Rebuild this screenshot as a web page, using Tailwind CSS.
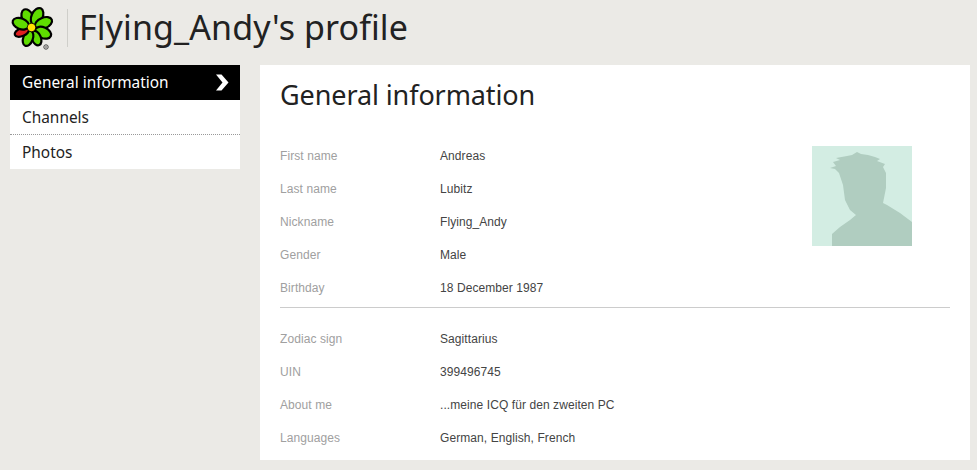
<!DOCTYPE html>
<html lang="en">
<head>
  <meta charset="UTF-8">
  <meta name="viewport" content="width=device-width, initial-scale=1.0">
  <title>Flying_Andy's profile</title>
  <script src="https://cdn.jsdelivr.net/npm/@tailwindcss/browser@4"></script>
</head>
<body class="bg-[#ebeae6] h-[470px] overflow-hidden font-['Noto_Sans',sans-serif] text-[#222]">
  <header class="flex items-center h-[65px] pl-[10px] pb-[10px]">
    <svg class="w-[44px] h-[46px]" viewBox="0 0 44 46">
      <g stroke="#000" stroke-width="2.2">
        <ellipse cx="22" cy="11.5" rx="5.6" ry="8.5" fill="#5fdc00" transform="rotate(-23 22 23)"/>
        <ellipse cx="22" cy="10.5" rx="5.6" ry="9" fill="#5fdc00" transform="rotate(24 22 23)"/>
        <ellipse cx="22" cy="10.5" rx="5.4" ry="9" fill="#5fdc00" transform="rotate(67 22 23)"/>
        <ellipse cx="22" cy="11" rx="5.4" ry="8.5" fill="#5fdc00" transform="rotate(113 22 23)"/>
        <ellipse cx="22" cy="12" rx="4.6" ry="7.5" fill="#5fdc00" transform="rotate(157 22 23)"/>
        <ellipse cx="22" cy="12" rx="4.8" ry="8" fill="#5fdc00" transform="rotate(201 22 23)"/>
        <ellipse cx="22" cy="12" rx="4" ry="7.5" fill="#e02020" transform="rotate(248 22 23)"/>
        <ellipse cx="22" cy="11" rx="5.4" ry="8.5" fill="#5fdc00" transform="rotate(291 22 23)"/>
        <circle cx="21.5" cy="22.5" r="4.2" fill="#ffe100" stroke-width="0.8"/>
      </g>
      <circle cx="36" cy="42" r="2.2" fill="none" stroke="#444" stroke-width="1"/>
      <circle cx="36" cy="42" r="0.8" fill="#444"/>
    </svg>
    <div class="w-px h-[38px] bg-[#cfcfca] ml-[13px] mr-[11px]"></div>
    <h1 class="text-[34px] leading-none tracking-[0.1px] -mt-[1px]">Flying_Andy's profile</h1>
  </header>

  <div class="flex items-start pl-[10px] gap-[20px]">
    <nav class="w-[230px] bg-white text-[15.4px]">
      <a class="flex items-center justify-between h-[35px] pl-[12px] pr-[11px] bg-black text-white">
        General information
        <svg class="w-[14px] h-[17px]" viewBox="0 0 14 17"><path d="M1 0.5h5.5l7 8-7 8H1l6.5-8z" fill="#fff"/></svg>
      </a>
      <a class="flex items-center h-[35px] pl-[12px] pt-[1px] border-b border-dotted border-[#999]">Channels</a>
      <a class="flex items-center h-[34px] pl-[12px] pt-[1px]">Photos</a>
    </nav>

    <main class="relative w-[710px] h-[395px] bg-white px-[20px] font-['Liberation_Sans',sans-serif] text-[12px] tracking-[0.08px]">
      <h2 class="font-['Noto_Sans',sans-serif] text-[27px] tracking-[-0.1px] leading-[40px] pt-[10px] h-[64px] box-content">General information</h2>

      <svg class="absolute left-[552px] top-[81px] w-[100px] h-[100px]" viewBox="0 0 100 100">
        <rect width="100" height="100" fill="#d3ede3"/>
        <path d="M20 100V88L28 81 38 74 44 69 38 64 33 54 31 39 27 27 23 23 18 22 24 20 21 16 28 14 24 12 35 10 40 9 45 6 49 8 56 9 63 11 68 13 65 15 73 18 71 21 74 27 74 42 71 57 75 59 88 67 100 76V100z" fill="#b0cdc0"/>
      </svg>

      <dl class="grid grid-cols-[160px_1fr] auto-rows-[33px] items-center text-[#444]">
        <dt class="text-[#a0a0a0]">First name</dt><dd>Andreas</dd>
        <dt class="text-[#a0a0a0]">Last name</dt><dd>Lubitz</dd>
        <dt class="text-[#a0a0a0]">Nickname</dt><dd>Flying_Andy</dd>
        <dt class="text-[#a0a0a0]">Gender</dt><dd>Male</dd>
        <dt class="text-[#a0a0a0]">Birthday</dt><dd>18 December 1987</dd>
      </dl>
      <hr class="border-t border-[#ccc] mt-[3px] mb-[14px]">
      <dl class="grid grid-cols-[160px_1fr] auto-rows-[33px] items-center text-[#444]">
        <dt class="text-[#a0a0a0]">Zodiac sign</dt><dd>Sagittarius</dd>
        <dt class="text-[#a0a0a0]">UIN</dt><dd>399496745</dd>
        <dt class="text-[#a0a0a0]">About me</dt><dd>...meine ICQ für den zweiten PC</dd>
        <dt class="text-[#a0a0a0]">Languages</dt><dd>German, English, French</dd>
      </dl>
    </main>
  </div>
</body>
</html>
